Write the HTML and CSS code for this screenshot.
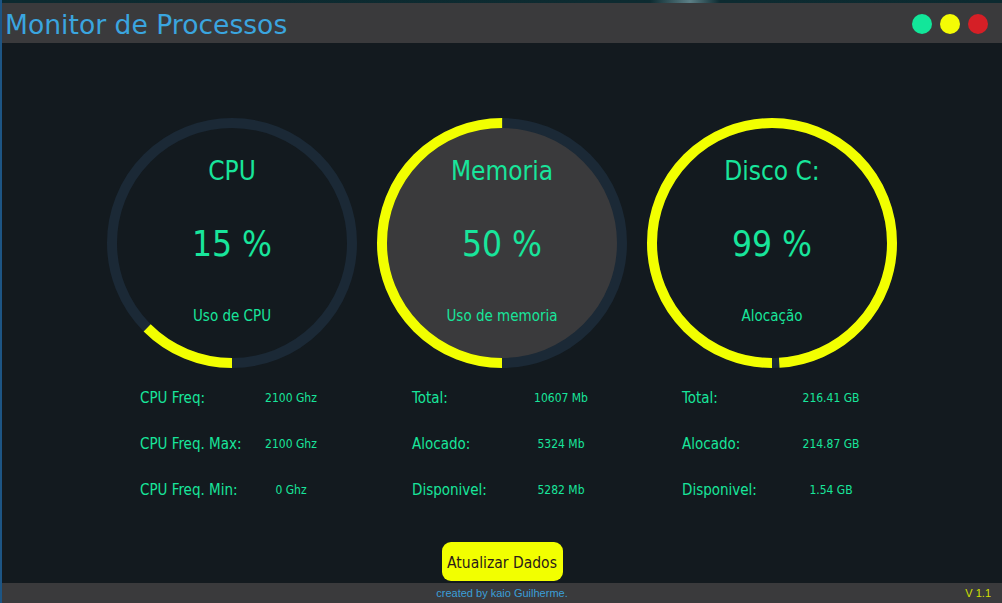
FILE: index.html
```html
<!DOCTYPE html>
<html lang="pt">
<head>
<meta charset="utf-8">
<title>Monitor de Processos</title>
<link rel="stylesheet" href="styles.css">
</head>
<body>
<div class="window">
  <header class="titlebar">
    <h1 class="title">Monitor de Processos</h1>
    <div class="controls">
      <span class="dot dot-green"></span>
      <span class="dot dot-yellow"></span>
      <span class="dot dot-red"></span>
    </div>
  </header>
  <main class="main">
    <div class="panels">
      <section class="panel panel-cpu">
        <div class="gauge">
          <svg class="ring" width="250" height="250" viewBox="0 0 250 250">
            <circle class="track" cx="125" cy="125" r="120"/>
            <circle class="progress" cx="125" cy="125" r="120" stroke-dasharray="94.2 800"/>
          </svg>
          <div class="gauge-text">
            <div class="gauge-title">CPU</div>
            <div class="gauge-value">15 %</div>
            <div class="gauge-label">Uso de CPU</div>
          </div>
        </div>
        <dl class="stats">
          <dt>CPU Freq:</dt><dd>2100 Ghz</dd>
          <dt>CPU Freq. Max:</dt><dd>2100 Ghz</dd>
          <dt>CPU Freq. Min:</dt><dd>0 Ghz</dd>
        </dl>
      </section>
      <section class="panel">
        <div class="gauge">
          <svg class="ring" width="250" height="250" viewBox="0 0 250 250">
            <circle class="track track-filled" cx="125" cy="125" r="120"/>
            <circle class="progress" cx="125" cy="125" r="120" stroke-dasharray="377 800"/>
          </svg>
          <div class="gauge-text">
            <div class="gauge-title">Memoria</div>
            <div class="gauge-value">50 %</div>
            <div class="gauge-label">Uso de memoria</div>
          </div>
        </div>
        <dl class="stats">
          <dt>Total:</dt><dd>10607 Mb</dd>
          <dt>Alocado:</dt><dd>5324 Mb</dd>
          <dt>Disponivel:</dt><dd>5282 Mb</dd>
        </dl>
      </section>
      <section class="panel">
        <div class="gauge">
          <svg class="ring" width="250" height="250" viewBox="0 0 250 250">
            <circle class="track" cx="125" cy="125" r="120"/>
            <circle class="progress" cx="125" cy="125" r="120" stroke-dasharray="746.4 800"/>
          </svg>
          <div class="gauge-text">
            <div class="gauge-title">Disco C:</div>
            <div class="gauge-value">99 %</div>
            <div class="gauge-label">Alocação</div>
          </div>
        </div>
        <dl class="stats">
          <dt>Total:</dt><dd>216.41 GB</dd>
          <dt>Alocado:</dt><dd>214.87 GB</dd>
          <dt>Disponivel:</dt><dd>1.54 GB</dd>
        </dl>
      </section>
    </div>
    <button class="refresh" type="button">Atualizar Dados</button>
  </main>
  <footer class="footer">
    <span class="credit">created by kaio Guilherme.</span>
    <span class="version">V 1.1</span>
  </footer>
</div>
</body>
</html>
```

FILE: styles.css
```css
html, body {
  margin: 0;
  padding: 0;
}

body {
  width: 1002px;
  height: 603px;
  overflow: hidden;
  background: linear-gradient(90deg, #1d5584 0px, #1d5584 2px, #0c2a30 2px, #0d2b31 650px, #5c7f86 690px, #0d2b31 720px, #0c2a30 100%);
}

.window {
  margin: 3px 0 0 2px;
  width: 1000px;
  height: 600px;
  display: flex;
  flex-direction: column;
  font-family: "DejaVu Sans Condensed", "DejaVu Sans", sans-serif;
}

.titlebar {
  height: 40px;
  flex: 0 0 40px;
  box-sizing: border-box;
  padding-top: 2px;
  background: #3a3a3c;
  display: flex;
  align-items: center;
  justify-content: space-between;
}

.title {
  margin: 0;
  padding: 2px 0 0 3px;
  font-family: "DejaVu Sans", sans-serif;
  font-weight: normal;
  font-size: 26.6px;
  line-height: 30px;
  color: #3aa5df;
}

.controls {
  display: flex;
  gap: 8px;
  padding-right: 14px;
}

.dot {
  width: 20px;
  height: 20px;
  border-radius: 50%;
}

.dot-green { background: #12e69a; }
.dot-yellow { background: #f4fb05; }
.dot-red { background: #d51f26; }

.main {
  flex: 1 1 auto;
  background: #131a1f;
  display: flex;
  flex-direction: column;
  align-items: center;
}

.panels {
  display: flex;
  justify-content: center;
  padding-top: 75px;
}

.panel {
  width: 270px;
  display: flex;
  flex-direction: column;
  align-items: center;
}

.gauge {
  display: grid;
  width: 250px;
  height: 250px;
}

.gauge > * {
  grid-area: 1 / 1;
}

.ring {
  display: block;
}

.track {
  fill: none;
  stroke: #1b2936;
  stroke-width: 10;
}

.track-filled {
  fill: #3a3a3c;
}

.progress {
  fill: none;
  stroke: #f2ff00;
  stroke-width: 10;
  transform: rotate(90deg);
  transform-origin: 125px 125px;
}

.gauge-text {
  display: flex;
  flex-direction: column;
  align-items: center;
  color: #18e59b;
  padding-top: 38px;
}

.gauge-title {
  font-size: 26px;
  line-height: 30px;
}

.gauge-value {
  margin-top: 38px;
  font-size: 35px;
  line-height: 40px;
}

.gauge-label {
  margin-top: 42px;
  font-size: 15px;
  line-height: 20px;
}

.stats {
  align-self: stretch;
  margin: 7px 0 0 0;
  padding-left: 45px;
  display: grid;
  grid-template-columns: 109px 80px;
  grid-auto-rows: 46px;
  align-items: center;
  color: #18e59b;
}

.panel-cpu .stats {
  padding-left: 43px;
  grid-template-columns: 111px 80px;
}

.stats dt {
  font-size: 15px;
}

.stats dd {
  margin: 0;
  font-size: 12px;
  text-align: center;
}

.refresh {
  margin-top: auto;
  margin-bottom: 2px;
  width: 121px;
  height: 39px;
  box-sizing: border-box;
  border: none;
  border-radius: 9px;
  background: #f2ff00;
  color: #2b1a1a;
  font-family: "DejaVu Sans Condensed", "DejaVu Sans", sans-serif;
  font-size: 15.5px;
  padding: 3px 0 0 0;
}

.footer {
  height: 20px;
  flex: 0 0 20px;
  background: #3a3a3c;
  display: grid;
  grid-template-columns: 1fr auto 1fr;
  align-items: center;
  font-family: "Liberation Sans", Arial, sans-serif;
  font-size: 11px;
}

.credit {
  grid-column: 2;
  color: #3b9fd8;
}

.version {
  grid-column: 3;
  justify-self: end;
  padding-right: 11px;
  color: #d4e000;
}
```
